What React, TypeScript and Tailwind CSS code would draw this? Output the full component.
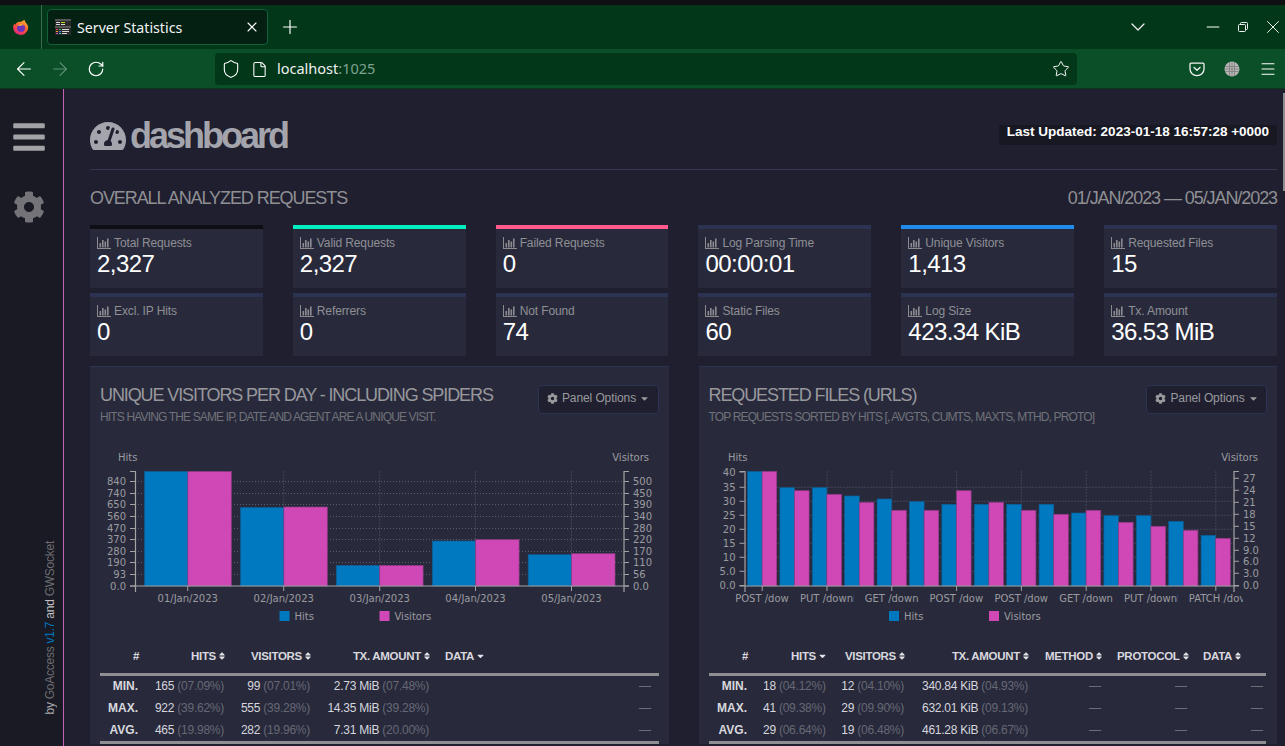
import { ArrowLeft, ArrowRight, ChevronDown, File, Menu, Minus, Plus, RotateCw, Shield, Star, X } from "lucide-react";
import { FaBars, FaCaretDown, FaCog, FaSort, FaTachometerAlt } from "react-icons/fa";

const tiles = [
  { label: "Total Requests", value: "2,327", bar: "border-[#0d0f14]" },
  { label: "Valid Requests", value: "2,327", bar: "border-[#00efc0]" },
  { label: "Failed Requests", value: "0", bar: "border-[#ff5c8d]" },
  { label: "Log Parsing Time", value: "00:00:01", bar: "border-[#2b3252]" },
  { label: "Unique Visitors", value: "1,413", bar: "border-[#1f8ceb]" },
  { label: "Requested Files", value: "15", bar: "border-[#2b3252]" },
  { label: "Excl. IP Hits", value: "0", bar: "border-[#2b3252]" },
  { label: "Referrers", value: "0", bar: "border-[#2b3252]" },
  { label: "Not Found", value: "74", bar: "border-[#2b3252]" },
  { label: "Static Files", value: "60", bar: "border-[#2b3252]" },
  { label: "Log Size", value: "423.34 KiB", bar: "border-[#2b3252]" },
  { label: "Tx. Amount", value: "36.53 MiB", bar: "border-[#2b3252]" },
];

const BLUE = "#0079c1";
const PINK = "#d048b6";
const GRID = "#5a5d6c";
const AXIS = "#a3a3a3";
const LABEL = "#9b9b9f";
const chartFont = "'DejaVu Sans', sans-serif";

const BarIcon = () => (
  <svg width="14" height="12" viewBox="0 0 14 12" className="shrink-0" fill="#8a8a8f">
    <rect x="0" y="0" width="1" height="12" />
    <rect x="0" y="11" width="14" height="1" />
    <rect x="2.5" y="6" width="1.6" height="4.5" />
    <rect x="5" y="3" width="1.6" height="7.5" />
    <rect x="7.5" y="4.5" width="1.6" height="6" />
    <rect x="10" y="1.5" width="1.6" height="9" />
  </svg>
);

const FirefoxLogo = () => (
  <svg width="16" height="16" viewBox="0 0 16 16">
    <defs>
      <linearGradient id="fx" x1="0.7" y1="0" x2="0.2" y2="1">
        <stop offset="0" stopColor="#ffb52e" />
        <stop offset="0.5" stopColor="#ff5634" />
        <stop offset="1" stopColor="#e3218b" />
      </linearGradient>
    </defs>
    <path d="M11 0.4c1 1.4 1.4 2.2 1.6 3 1.8 1.6 2.8 3.6 2.6 5.6A7.5 7.5 0 1 1 1.4 4.4c0.2 0.8 0.6 1.2 1 1.4C3 4 4.6 3 6.4 2.8 8 2.6 10.4 2.4 11 0.4z" fill="url(#fx)" />
    <circle cx="8" cy="9" r="4" fill="#6a34b8" />
    <path d="M4.4 6.6c2-2 5.4-2 6.8 0.2-1.6-0.8-3-0.6-3.6 0.2-1-0.2-2.2-0.4-3.2-0.4z" fill="#ffa436" />
  </svg>
);

const TermFavicon = () => (
  <svg width="16" height="16" viewBox="0 0 16 16" className="shrink-0">
    <rect x="0" y="0" width="16" height="16" fill="#2a2a2a" />
    <rect x="0" y="0" width="16" height="2" fill="#555" />
    <rect x="1" y="3" width="4" height="1" fill="#d8d8d8" />
    <rect x="6" y="3" width="4" height="1" fill="#c6d800" />
    <rect x="1" y="5" width="4" height="1" fill="#d8d8d8" />
    <rect x="6" y="5" width="4" height="1" fill="#d8d8d8" />
    <rect x="0" y="7" width="16" height="2" fill="#555" />
    <rect x="1" y="10" width="2" height="1" fill="#e83e5a" />
    <rect x="4" y="10" width="2" height="1" fill="#36b24a" />
    <rect x="7" y="10" width="7" height="1" fill="#d8d8d8" />
    <rect x="1" y="12" width="2" height="1" fill="#e8a020" />
    <rect x="4" y="12" width="2" height="1" fill="#3a80e0" />
    <rect x="7" y="12" width="7" height="1" fill="#d8d8d8" />
    <rect x="1" y="14" width="2" height="1" fill="#c040c0" />
    <rect x="4" y="14" width="2" height="1" fill="#40c0c0" />
    <rect x="7" y="14" width="5" height="1" fill="#d8d8d8" />
  </svg>
);

const PocketIcon = () => (
  <svg width="16" height="16" viewBox="0 0 16 16" fill="none" stroke="#f2f2f2" strokeWidth="1.3" strokeLinecap="round" strokeLinejoin="round">
    <path d="M2 2.2h12a1 1 0 0 1 1 1V8a7 6.6 0 0 1-14 0V3.2a1 1 0 0 1 1-1z" />
    <path d="M5 6.4l3 2.8 3-2.8" />
  </svg>
);

const GlobeIcon = () => (
  <svg width="16" height="16" viewBox="0 0 16 16">
    <circle cx="8" cy="8" r="7.5" fill="#b5b5b5" />
    <g stroke="#7d7d7d" strokeWidth="0.8" fill="none">
      <path d="M1 5.5h14M0.5 8h15M1 10.5h14M5.5 1v14M8 0.5v15M10.5 1v14" />
    </g>
  </svg>
);

const RestoreIcon = () => (
  <svg width="10" height="10" viewBox="0 0 10 10" fill="none" stroke="#f0f0f0" strokeWidth="1">
    <rect x="0.5" y="2.5" width="7" height="7" rx="1" />
    <path d="M2.5 2.5V1.5a1 1 0 0 1 1-1h5a1 1 0 0 1 1 1v5a1 1 0 0 1-1 1H7.5" />
  </svg>
);

type YTick = { y: number; label: string };

type BarGroup = { x: number; hits: number; visitors: number };

type ChartSpec = {
  viewX: number;
  left: number;
  right: number;
  leftTicks: YTick[];
  rightTicks: YTick[];
  grid: number[];
  vGrid: number[];
  xLabels: { x: number; label: string; clip?: boolean }[];
  groups: BarGroup[];
  barW: number;
  hitsX: number;
  visitorsX: number;
  legendBlue: number;
  legendPink: number;
  clipId: string;
};

const TOP = 471.5;
const BOTTOM = 586;

function Chart({ spec }: { spec: ChartSpec }) {
  return (
    <svg width="578.5" height="200" viewBox={`${spec.viewX} 440 578.5 200`} className="block" style={{ fontFamily: chartFont }}>
      <defs>
        {spec.xLabels.map((l, i) => (
          <clipPath key={i} id={`${spec.clipId}-${i}`}>
            <rect x={l.x - 28} y="590" width="55" height="16" />
          </clipPath>
        ))}
      </defs>
      {spec.grid.map((y) => (
        <line key={y} x1={spec.left} x2={spec.right} y1={y} y2={y} stroke={GRID} strokeDasharray="1 2" />
      ))}
      {spec.vGrid.map((x) => (
        <line key={x} x1={x} x2={x} y1={TOP} y2={BOTTOM} stroke={GRID} strokeDasharray="1 2" />
      ))}
      {spec.groups.map((g) => (
        <g key={g.x}>
          <rect x={g.x} y={g.hits} width={spec.barW} height={BOTTOM - g.hits} fill={BLUE} stroke="#0b5d94" strokeWidth="0.7" />
          <rect x={g.x + spec.barW} y={g.visitors} width={spec.barW} height={BOTTOM - g.visitors} fill={PINK} stroke="#8f3a85" strokeWidth="0.7" />
        </g>
      ))}
      {/* axes */}
      <path
        d={`M${spec.left - 5} ${TOP}H${spec.left + 0.5}V${BOTTOM + 6}M${spec.left - 5} ${BOTTOM}H${spec.right + 5}M${spec.right} ${BOTTOM + 6}V${TOP}H${spec.right + 5}`}
        fill="none"
        stroke={AXIS}
        strokeWidth="1.2"
      />
      {spec.leftTicks.map((t) => (
        <g key={t.label}>
          <line x1={spec.left - 5} x2={spec.left} y1={t.y} y2={t.y} stroke={AXIS} />
          <text x={spec.left - 9} y={t.y + 3.6} textAnchor="end" fontSize="10" fill={LABEL}>
            {t.label}
          </text>
        </g>
      ))}
      {spec.rightTicks.map((t) => (
        <g key={t.label}>
          <line x1={spec.right} x2={spec.right + 5} y1={t.y} y2={t.y} stroke={AXIS} />
          <text x={spec.right + 9} y={t.y + 3.6} fontSize="10" fill={LABEL}>
            {t.label}
          </text>
        </g>
      ))}
      {spec.xLabels.map((l, i) => (
        <g key={i}>
          <line x1={l.x} x2={l.x} y1={BOTTOM} y2={BOTTOM + 5} stroke={AXIS} />
          {l.clip ? (
            <g clipPath={`url(#${spec.clipId}-${i})`}>
              <text x={l.x - 27} y="601.5" fontSize="10" fill={LABEL}>
                {l.label}
              </text>
            </g>
          ) : (
            <text x={l.x} y="601.5" textAnchor="middle" fontSize="10" fill={LABEL}>
              {l.label}
            </text>
          )}
        </g>
      ))}
      <text x={spec.hitsX} y="460.5" fontSize="10" fill={LABEL}>
        Hits
      </text>
      <text x={spec.visitorsX} y="460.5" textAnchor="end" fontSize="10" fill={LABEL}>
        Visitors
      </text>
      <rect x={spec.legendBlue} y="611" width="10" height="10" fill={BLUE} />
      <text x={spec.legendBlue + 15} y="620" fontSize="10" fill={LABEL}>
        Hits
      </text>
      <rect x={spec.legendPink} y="611" width="10" height="10" fill={PINK} />
      <text x={spec.legendPink + 15} y="620" fontSize="10" fill={LABEL}>
        Visitors
      </text>
    </svg>
  );
}

const visitorsChart: ChartSpec = {
  viewX: 90,
  left: 135,
  right: 624,
  clipId: "v",
  barW: 43.4,
  hitsX: 118,
  visitorsX: 649,
  legendBlue: 279.5,
  legendPink: 379.5,
  leftTicks: [
    { y: 481.5, label: "840" },
    { y: 493.5, label: "740" },
    { y: 504.5, label: "650" },
    { y: 516.5, label: "560" },
    { y: 528.5, label: "470" },
    { y: 539.5, label: "370" },
    { y: 551.5, label: "280" },
    { y: 562.5, label: "190" },
    { y: 574.5, label: "93" },
    { y: 586, label: "0.0" },
  ],
  rightTicks: [
    { y: 481.5, label: "500" },
    { y: 493.5, label: "450" },
    { y: 504.5, label: "390" },
    { y: 516.5, label: "340" },
    { y: 528.5, label: "280" },
    { y: 539.5, label: "220" },
    { y: 551.5, label: "170" },
    { y: 562.5, label: "110" },
    { y: 574.5, label: "56" },
    { y: 586, label: "0.0" },
  ],
  grid: [481.5, 493.5, 504.5, 516.5, 528.5, 539.5, 551.5, 562.5, 574.5],
  vGrid: [283.7, 379.7, 475.5, 571.5],
  xLabels: [
    { x: 187.7, label: "01/Jan/2023" },
    { x: 283.7, label: "02/Jan/2023" },
    { x: 379.7, label: "03/Jan/2023" },
    { x: 475.5, label: "04/Jan/2023" },
    { x: 571.5, label: "05/Jan/2023" },
  ],
  groups: [
    { x: 144.5, hits: 471.5, visitors: 471.5 },
    { x: 240.5, hits: 507.5, visitors: 507 },
    { x: 336.3, hits: 565.5, visitors: 565.5 },
    { x: 432.3, hits: 541, visitors: 539.7 },
    { x: 528.2, hits: 554.7, visitors: 553.7 },
  ],
};

const fileTops = [
  [471.5, 471.5],
  [487.7, 490.7],
  [487.7, 494.3],
  [496, 502.3],
  [499, 510.3],
  [501.7, 510.3],
  [504.3, 490.7],
  [504.3, 502.3],
  [504.3, 510.3],
  [504.3, 514.3],
  [513, 510.3],
  [515.7, 522.3],
  [515.7, 526.3],
  [521.3, 530.3],
  [535.3, 538.3],
];

const fileLabels = ["POST /dow", "PUT /downl", "GET /downl", "POST /dow", "POST /dow", "GET /down", "PUT /downl", "PATCH /dov"];

const filesChart: ChartSpec = {
  viewX: 698.5,
  left: 744,
  right: 1233.5,
  clipId: "f",
  barW: 14.6,
  hitsX: 727.5,
  visitorsX: 1257.5,
  legendBlue: 888.5,
  legendPink: 988.5,
  leftTicks: [
    { y: 472, label: "40" },
    { y: 487.3, label: "35" },
    { y: 501.3, label: "30" },
    { y: 515.3, label: "25" },
    { y: 529.3, label: "20" },
    { y: 543.3, label: "15" },
    { y: 557.3, label: "10" },
    { y: 571.3, label: "5.0" },
    { y: 585.5, label: "0.0" },
  ],
  rightTicks: [
    { y: 478.3, label: "27" },
    { y: 490.3, label: "24" },
    { y: 502.3, label: "21" },
    { y: 514.3, label: "18" },
    { y: 526.3, label: "15" },
    { y: 538.3, label: "12" },
    { y: 550.3, label: "9.0" },
    { y: 561.3, label: "6.0" },
    { y: 573.3, label: "3.0" },
    { y: 585.5, label: "0.0" },
  ],
  grid: [487.3, 501.3, 515.3, 529.3, 543.3, 557.3, 571.3],
  vGrid: fileLabels.map((_, i) => 761.7 + 64.8 * i),
  xLabels: fileLabels.map((label, i) => ({ x: 761.7 + 64.8 * i, label, clip: true })),
  groups: fileTops.map(([hits, visitors], i) => ({ x: 747 + 32.4 * i, hits, visitors })),
};

const Sort = () => <FaSort className="inline-block ml-[3px] w-[6px] h-[10px] align-[-1px] text-[#e4e4e8]" />;
const Caret = () => <FaCaretDown className="inline-block ml-[3px] w-[7px] h-[10px] align-[-1px] text-[#e4e4e8]" />;

function Metric({ value, pct }: { value: string; pct: string }) {
  return (
    <td className="px-2 text-right whitespace-nowrap text-[#d6d6dc] tracking-[-0.25px]">
      {value} <span className="text-[#666874]">{pct}</span>
    </td>
  );
}

const Dash = ({ className = "" }: { className?: string }) => <td className={`px-2 text-right text-[#6b6d78] ${className}`}>—</td>;

const thClass = "h-[29px] pb-[4px] pl-2 pr-[7px] text-[11.5px] font-bold text-[#d8d8de] whitespace-nowrap tracking-[-0.3px]";
const rowHead = "px-2 text-right font-bold text-[#d8d8de] text-[12px]";
const firstRow = "h-[22px]";
const rowClass = "h-[23px]";

function VisitorsTable() {
  return (
    <table className="w-[559px] ml-[10px] table-fixed border-collapse text-[12px]">
      <colgroup>
        <col className="w-[46px]" />
        <col className="w-[86px]" />
        <col className="w-[86px]" />
        <col className="w-[119px]" />
        <col />
      </colgroup>
      <thead>
        <tr className="border-b-[3px] border-[#8f8f93]">
          <th className={`${thClass} text-right`}>#</th>
          <th className={`${thClass} text-right`}>HITS<Sort /></th>
          <th className={`${thClass} text-right`}>VISITORS<Sort /></th>
          <th className={`${thClass} text-right`}>TX. AMOUNT<Sort /></th>
          <th className={`${thClass} text-left`}>DATA<Caret /></th>
        </tr>
      </thead>
      <tbody className="border-b-[3px] border-[#8f8f93]">
        <tr className={firstRow}>
          <td className={rowHead}>MIN.</td>
          <Metric value="165" pct="(07.09%)" />
          <Metric value="99" pct="(07.01%)" />
          <Metric value="2.73 MiB" pct="(07.48%)" />
          <Dash />
        </tr>
        <tr className={rowClass}>
          <td className={rowHead}>MAX.</td>
          <Metric value="922" pct="(39.62%)" />
          <Metric value="555" pct="(39.28%)" />
          <Metric value="14.35 MiB" pct="(39.28%)" />
          <Dash />
        </tr>
        <tr className={rowClass}>
          <td className={rowHead}>AVG.</td>
          <Metric value="465" pct="(19.98%)" />
          <Metric value="282" pct="(19.96%)" />
          <Metric value="7.31 MiB" pct="(20.00%)" />
          <Dash />
        </tr>
      </tbody>
    </table>
  );
}

function FilesTable() {
  return (
    <table className="w-[557px] ml-[10.5px] table-fixed border-collapse text-[12px]">
      <colgroup>
        <col className="w-[46px]" />
        <col className="w-[78px]" />
        <col className="w-[79px]" />
        <col className="w-[124px]" />
        <col className="w-[73px]" />
        <col className="w-[86px]" />
        <col />
      </colgroup>
      <thead>
        <tr className="border-b-[3px] border-[#8f8f93]">
          <th className={`${thClass} text-right`}>#</th>
          <th className={`${thClass} text-right`}>HITS<Caret /></th>
          <th className={`${thClass} text-right`}>VISITORS<Sort /></th>
          <th className={`${thClass} text-right`}>TX. AMOUNT<Sort /></th>
          <th className={`${thClass} text-right`}>METHOD<Sort /></th>
          <th className={`${thClass} text-right`}>PROTOCOL<Sort /></th>
          <th className={`${thClass} text-left`}>DATA<Sort /></th>
        </tr>
      </thead>
      <tbody className="border-b-[3px] border-[#8f8f93]">
        <tr className={firstRow}>
          <td className={rowHead}>MIN.</td>
          <Metric value="18" pct="(04.12%)" />
          <Metric value="12" pct="(04.10%)" />
          <Metric value="340.84 KiB" pct="(04.93%)" />
          <Dash />
          <Dash />
          <Dash className="!pr-[3px]" />
        </tr>
        <tr className={rowClass}>
          <td className={rowHead}>MAX.</td>
          <Metric value="41" pct="(09.38%)" />
          <Metric value="29" pct="(09.90%)" />
          <Metric value="632.01 KiB" pct="(09.13%)" />
          <Dash />
          <Dash />
          <Dash className="!pr-[3px]" />
        </tr>
        <tr className={rowClass}>
          <td className={rowHead}>AVG.</td>
          <Metric value="29" pct="(06.64%)" />
          <Metric value="19" pct="(06.48%)" />
          <Metric value="461.28 KiB" pct="(06.67%)" />
          <Dash />
          <Dash />
          <Dash className="!pr-[3px]" />
        </tr>
      </tbody>
    </table>
  );
}

function Panel({ title, subtitle, children, chart }: { title: string; subtitle: string; children: React.ReactNode; chart: ChartSpec }) {
  return (
    <section className="bg-[#282a3c] border-t border-[#2b3252]">
      <div className="h-[73px] flex justify-between pl-[10px] pr-[10px] pt-[18px]">
        <div>
          <h2 className="text-[18px] leading-[20px] text-[#98989c] tracking-[-1.1px] whitespace-nowrap">{title}</h2>
          <p className="text-[12px] leading-[14px] mt-[5px] text-[#707279] tracking-[-0.85px] whitespace-nowrap">{subtitle}</p>
        </div>
        <button type="button" className="h-[29px] w-[121px] shrink-0 flex items-center justify-center gap-[4px] pb-[3px] rounded-[4px] border border-[#2b3252] bg-[#1f1f2f] text-[12px] tracking-[-0.1px] text-[#9a9a9e]">
          <FaCog className="w-[11px] h-[11px]" />
          Panel Options
          <FaCaretDown className="w-[9px] h-[11px]" />
        </button>
      </div>
      <Chart spec={chart} />
      <div className="h-[5px]" />
      {children}
    </section>
  );
}

export default function App() {
  return (
    <div className="h-screen w-full overflow-hidden flex flex-col bg-[#1f1f2f] font-['Liberation_Sans',Arial,sans-serif]">
      {/* browser chrome */}
      <div className="h-[5px] bg-[#101012]" />
      <div className="h-[44px] bg-[#03371a] flex items-center text-white">
        <div className="w-[42px] h-full flex items-center justify-center border-r border-[#3d6a50]">
          <FirefoxLogo />
        </div>
        <div className="ml-[5px] w-[221px] h-[36px] rounded-[4px] border border-[#11603a] bg-[#032012] flex items-center pl-[7px] pr-[7px] gap-[6px]">
          <TermFavicon />
          <span className="flex-1 pt-[1px] text-[14.2px] text-[#f4f4f4] font-['Noto_Sans',sans-serif] whitespace-nowrap">Server Statistics</span>
          <X size={16} strokeWidth={1.6} />
        </div>
        <Plus size={22} strokeWidth={1.3} className="ml-[11px]" />
        <div className="ml-auto flex items-center">
          <ChevronDown size={24} strokeWidth={1.3} className="text-[#f0f0f0]" />
          <Minus size={20} strokeWidth={1.4} className="ml-[53px]" />
          <div className="ml-[15px]">
            <RestoreIcon />
          </div>
          <X size={22} strokeWidth={1} className="ml-[14px] mr-[1px]" />
        </div>
      </div>
      <div className="h-[40px] pt-[1px] bg-[#0b4f28] flex items-center text-white border-b border-[#07391c]">
        <ArrowLeft size={22} strokeWidth={1.2} className="ml-[13px]" />
        <ArrowRight size={22} strokeWidth={1.2} className="ml-[14px] text-[#5f9078]" />
        <RotateCw size={18} strokeWidth={1.6} className="ml-[16px]" />
        <div className="ml-[110px] w-[862px] h-[32px] rounded-[4px] bg-[#03371a] flex items-center pl-[6px] pr-[7px]">
          <Shield size={20} strokeWidth={1.3} />
          <File size={17} strokeWidth={1.5} className="ml-[9.5px]" />
          <span className="ml-[9.5px] text-[14.5px] font-['Noto_Sans',sans-serif] text-[#f0f0f0]">
            localhost<span className="text-[#7fa391]">:1025</span>
          </span>
          <Star size={18} strokeWidth={1.3} className="ml-auto" />
        </div>
        <div className="ml-auto flex items-center gap-[19px] pr-[8px]">
          <PocketIcon />
          <GlobeIcon />
          <Menu size={18} strokeWidth={1.4} />
        </div>
      </div>

      <div className="flex-1 min-h-0 flex relative">
        {/* sidebar */}
        <aside className="w-[64px] shrink-0 bg-[#191a23] border-r border-[#c763b4] flex flex-col items-center">
          <FaBars className="mt-[30px] mr-[5px] w-[32px] h-[36px] text-[#a3a3a7]" />
          <FaCog className="mt-[36px] mr-[5px] w-[32px] h-[32px] text-[#737378]" />
          <p className="mt-auto mb-[31px] self-end mr-[6px] [writing-mode:vertical-rl] rotate-180 text-[12px] leading-[14px] tracking-[-0.25px] text-[#6d6d72] whitespace-nowrap">
            <span className="text-[#a8a8ac]">by</span> GoAccess <span className="text-[#0079c1]">v1.7</span> <span className="text-[#c0c0c4]">and</span> GWSocket
          </p>
        </aside>

        {/* scrollbar */}
        <div className="absolute right-0 top-[4px] w-[2px] h-[98px] bg-[#8d8d8d]" />

        <main className="flex-1 min-w-0 pl-[26px] pr-[8px]">
          <header className="h-[81px] flex justify-between items-start border-b border-[#32364e]">
            <div className="flex items-center mt-[31px] text-[#a4a4ac]">
              <FaTachometerAlt className="w-[36px] h-[32px]" />
              <h1 className="ml-[4px] text-[36px] leading-[32px] font-bold tracking-[-3px]">dashboard</h1>
            </div>
            <div className="mt-[36px] w-[278px] h-[20px] rounded-[3px] bg-[#181822] text-white font-bold text-[13.5px] leading-[14px] text-center whitespace-nowrap">
              Last Updated: 2023-01-18 16:57:28 +0000
            </div>
          </header>

          <div className="h-[55px] flex justify-between items-start pt-[17px] text-[#8f8f94] text-[18px] leading-[22px] tracking-[-1.08px]">
            <h2>OVERALL ANALYZED REQUESTS</h2>
            <span>01/JAN/2023 — 05/JAN/2023</span>
          </div>

          <div className="grid grid-cols-6 gap-x-[30px] gap-y-[5px]">
            {tiles.map((t) => (
              <div key={t.label} className={`h-[63px] bg-[#282a3c] border-t-4 ${t.bar} pl-[7px] pt-[7px]`}>
                <div className="flex items-center gap-[3px] text-[12px] leading-[14px] tracking-[-0.12px] text-[#8f8f94] whitespace-nowrap">
                  <BarIcon />
                  {t.label}
                </div>
                <div className="text-[24px] leading-[28px] text-white tracking-[-0.55px] whitespace-nowrap">{t.value}</div>
              </div>
            ))}
          </div>

          <div className="mt-[10px] grid grid-cols-2 gap-x-[30px] items-start">
            <Panel title="UNIQUE VISITORS PER DAY - INCLUDING SPIDERS" subtitle="HITS HAVING THE SAME IP, DATE AND AGENT ARE A UNIQUE VISIT." chart={visitorsChart}>
              <VisitorsTable />
            </Panel>
            <Panel title="REQUESTED FILES (URLS)" subtitle="TOP REQUESTS SORTED BY HITS [, AVGTS, CUMTS, MAXTS, MTHD, PROTO]" chart={filesChart}>
              <FilesTable />
            </Panel>
          </div>
        </main>
      </div>
    </div>
  );
}
